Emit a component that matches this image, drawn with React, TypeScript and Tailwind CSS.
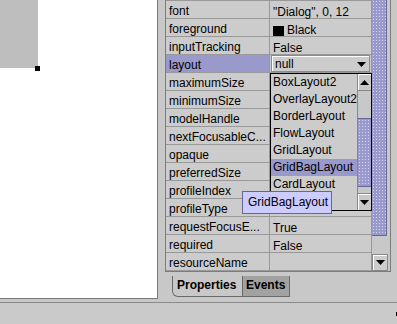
import React from "react";

type Row = { name: string; value?: string; swatch?: boolean; combo?: boolean };

const ROWS: Row[] = [
  { name: "font", value: '"Dialog", 0, 12' },
  { name: "foreground", value: "Black", swatch: true },
  { name: "inputTracking", value: "False" },
  { name: "layout", combo: true },
  { name: "maximumSize" },
  { name: "minimumSize" },
  { name: "modelHandle" },
  { name: "nextFocusableC..." },
  { name: "opaque" },
  { name: "preferredSize" },
  { name: "profileIndex" },
  { name: "profileType" },
  { name: "requestFocusE...", value: "True" },
  { name: "required", value: "False" },
  { name: "resourceName" },
];

const LAYOUTS = ["BoxLayout2", "OverlayLayout2", "BorderLayout", "FlowLayout", "GridLayout", "GridBagLayout", "CardLayout", ""];

function DownArrow() {
  return (
    <svg width="9" height="5" viewBox="0 0 9 5">
      <polygon points="0,0 9,0 4.5,5" fill="#000" />
    </svg>
  );
}

function UpArrow() {
  return (
    <svg width="9" height="5" viewBox="0 0 9 5">
      <polygon points="0,5 9,5 4.5,0" fill="#000" />
    </svg>
  );
}

const dotted =
  "bg-[#9999cc] [background-image:radial-gradient(#d4d4f4_0.6px,transparent_0.9px)] [background-size:3px_3px]";

export default function App() {
  return (
    <div className="w-[397px] h-[324px] bg-[#c8c8c8] flex flex-col overflow-hidden font-['Liberation_Sans',Arial,sans-serif] text-[12px] text-black">
      <div className="flex h-[303px] border-b border-[#8a8a8a]">
        {/* canvas */}
        <div className="w-[158px] h-[299px] bg-white border-r border-b border-[#7a7a7a] relative shrink-0">
          <div className="w-[38px] h-[68px] bg-[#bebebe]" />
          <div className="absolute left-[35px] top-[66px] w-[5px] h-[5px] bg-black" />
        </div>

        {/* property sheet */}
        <div className="flex-1 pl-[7px] flex flex-col">
          <div className="relative w-[226px] h-[272px] border-l border-r border-b border-[#7c7c7c] flex bg-[#c8c8c8]">
            <div className="w-[206px] border-t border-[#999999] flex flex-col">
              {ROWS.map((r) => (
                <div key={r.name} className="flex h-[18px] border-b border-[#999999] bg-[#cccccc]">
                  <div
                    className={`w-[104px] border-r border-[#999999] pl-[3px] pt-[4px] leading-[13px] whitespace-nowrap ${
                      r.combo ? "bg-[#9999cc]" : ""
                    }`}
                  >
                    {r.name}
                  </div>
                  <div className="w-[102px] border-r border-[#999999] whitespace-nowrap">
                    {r.combo ? (
                      <div className="ml-[1px] mr-[1px] h-[17px] border border-[#8585b8] shadow-[inset_1px_1px_0_#ffffff] flex items-center justify-between pl-[3px] pr-[3px] pt-[1px]">
                        <span>null</span>
                        <DownArrow />
                      </div>
                    ) : r.swatch ? (
                      <div className="flex items-start pl-[3px] pt-[7px]">
                        <div className="w-[11px] h-[10px] bg-black" />
                        <span className="ml-[3px] leading-[13px] -mt-[2px]">{r.value}</span>
                      </div>
                    ) : (
                      <div className="pl-[3px] pt-[5px] leading-[13px]">{r.value}</div>
                    )}
                  </div>
                </div>
              ))}
            </div>

            {/* table scrollbar */}
            <div className="w-[18px] flex flex-col">
              <div className={`w-[15px] h-[236px] ${dotted} border-r border-b border-[#666699]`} />
              <div className="flex-1" />
              <div className="w-[16px] h-[17px] border border-[#888888] shadow-[inset_1px_1px_0_#ffffff] bg-[#cccccc] flex items-center justify-center">
                <DownArrow />
              </div>
            </div>

            {/* open combo list */}
            <div className="absolute left-[104px] top-[73px] w-[102px] h-[138px] border border-black bg-[#cccccc] flex">
              <div className="flex-1 flex flex-col">
                {LAYOUTS.map((l, i) => (
                  <div
                    key={i}
                    className={`h-[17px] leading-[17px] pl-[2px] whitespace-nowrap ${l === "GridBagLayout" ? "bg-[#9999cc]" : ""}`}
                  >
                    {l}
                  </div>
                ))}
              </div>
              <div className="w-[15px] border-l border-[#888888] flex flex-col bg-[#c8c8c8]">
                <div className="h-[17px] border-b border-[#888888] shadow-[inset_1px_1px_0_#ffffff] flex items-center justify-center">
                  <UpArrow />
                </div>
                <div className="h-[27px]" />
                <div className={`h-[69px] ${dotted} border-t border-b border-[#666699]`} />
                <div className="flex-1" />
                <div className="h-[17px] border-t border-[#888888] shadow-[inset_1px_1px_0_#ffffff] flex items-center justify-center">
                  <DownArrow />
                </div>
              </div>
            </div>

            {/* tooltip */}
            <div className="absolute left-[76px] top-[191px] w-[90px] h-[23px] bg-[#ccccff] border border-[#666699] pl-[5px] leading-[21px] whitespace-nowrap">
              GridBagLayout
            </div>
          </div>

          {/* tabs */}
          <div className="flex mt-[4px] ml-[7px] h-[21px]">
            <div className="w-[71px] border-l border-b border-r border-[#6a6a6a] rounded-bl-[6px] bg-[#c8c8c8] pl-[4px] font-bold leading-[19px]">
              Properties
            </div>
            <div className="w-[47px] border-b border-r border-[#6a6a6a] bg-[#a2a2a2] pl-[3px] font-bold leading-[19px]">
              Events
            </div>
          </div>
        </div>
      </div>

      {/* status bar */}
      <div className="flex-1 flex bg-[#cacaca]">
        <div className="ml-auto mt-[9px] w-[1px] h-[4px] bg-black" />
      </div>
    </div>
  );
}
